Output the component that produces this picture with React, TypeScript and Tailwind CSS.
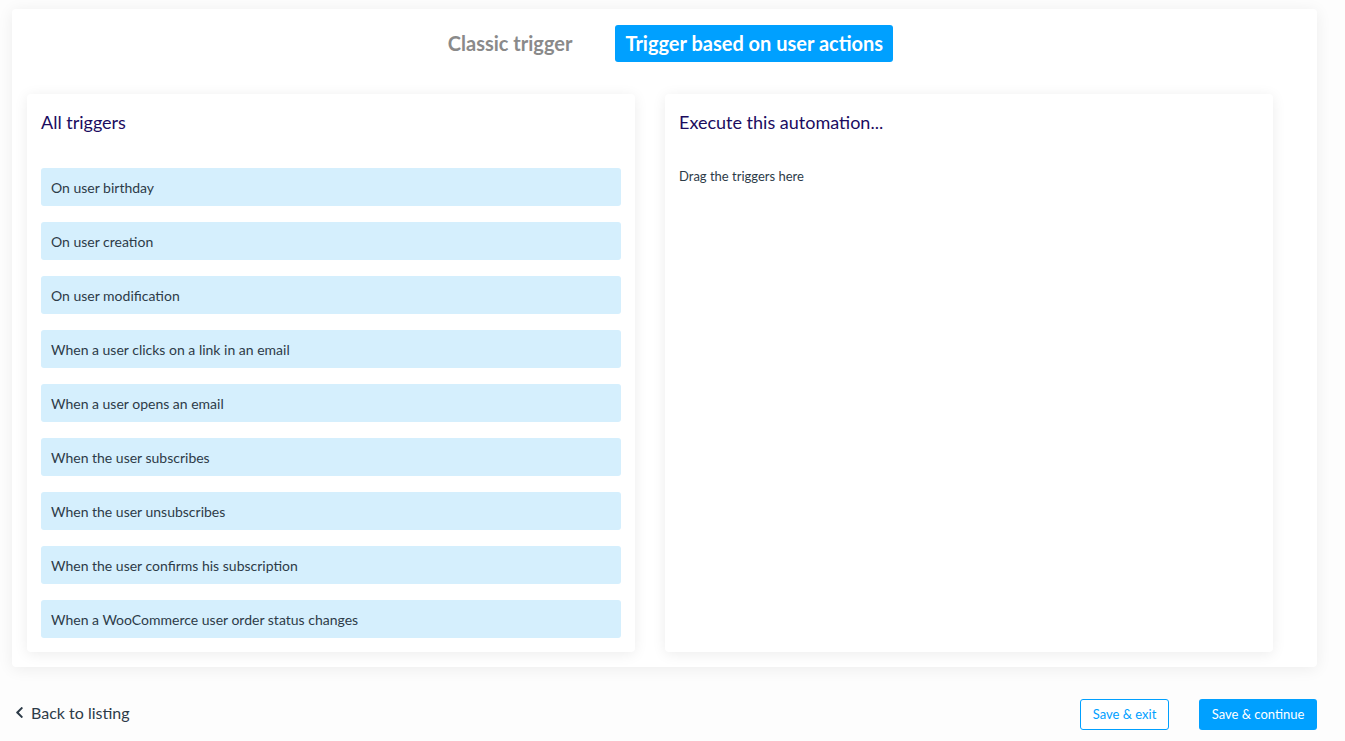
import { FaChevronLeft } from "react-icons/fa";

const triggers = [
  "On user birthday",
  "On user creation",
  "On user modification",
  "When a user clicks on a link in an email",
  "When a user opens an email",
  "When the user subscribes",
  "When the user unsubscribes",
  "When the user confirms his subscription",
  "When a WooCommerce user order status changes",
];

function Panel({ title, children }: { title: string; children: React.ReactNode }) {
  return (
    <section className="flex h-[558px] w-[608px] flex-col rounded bg-white px-[14px] shadow-[0_2px_14px_rgba(0,0,0,0.08)]">
      <h2 className="mt-[15px] h-[26px] text-[18px] leading-[26px] text-[#1b0c5f]">{title}</h2>
      {children}
    </section>
  );
}

export default function App() {
  return (
    <div className="min-h-[741px] bg-[#fdfdfd] font-['Lato',sans-serif] text-[#2d3b48]">
      <div className="pl-[12px] pt-[9px]">
        <div className="w-[1305px] rounded bg-white pb-[15px] pl-[15px] shadow-[0_2px_16px_rgba(0,0,0,0.07)]">
          <div className="flex h-[85px] items-start justify-center pt-[16px] pr-[3px]">
            <button
              type="button"
              className="mr-[43px] h-[37px] pb-[2px] text-[20px] font-bold text-[#8a8a8a]"
            >
              Classic trigger
            </button>
            <button
              type="button"
              className="h-[37px] rounded-[3px] bg-[#00a0ff] px-[10px] pb-[2px] text-[20px] font-bold text-white"
            >
              Trigger based on user actions
            </button>
          </div>

          <div className="flex gap-[30px]">
            <Panel title="All triggers">
              <ul className="mt-[33px] flex flex-col gap-[16px]">
                {triggers.map((t) => (
                  <li
                    key={t}
                    className="flex h-[38px] items-center rounded-[3px] bg-[#d5effd] px-[10px] text-[14px]"
                  >
                    {t}
                  </li>
                ))}
              </ul>
            </Panel>
            <Panel title="Execute this automation...">
              <p className="mt-[32px] text-[13px]">Drag the triggers here</p>
            </Panel>
          </div>
        </div>
      </div>

      <div className="flex items-center justify-between pl-[13px] pr-[28px] pt-[32px]">
        <a href="#" className="-mt-[4px] flex items-center gap-[5px] text-[16px] text-[#2d3b48]">
          <FaChevronLeft size={13} />
          Back to listing
        </a>
        <div className="flex gap-[30px]">
          <button
            type="button"
            className="h-[31px] w-[89px] rounded-[3px] border border-[#00a0ff] bg-white text-[13px] text-[#00a0ff]"
          >
            Save &amp; exit
          </button>
          <button
            type="button"
            className="h-[31px] w-[118px] rounded-[3px] bg-[#00a0ff] text-[13px] text-white"
          >
            Save &amp; continue
          </button>
        </div>
      </div>
    </div>
  );
}
